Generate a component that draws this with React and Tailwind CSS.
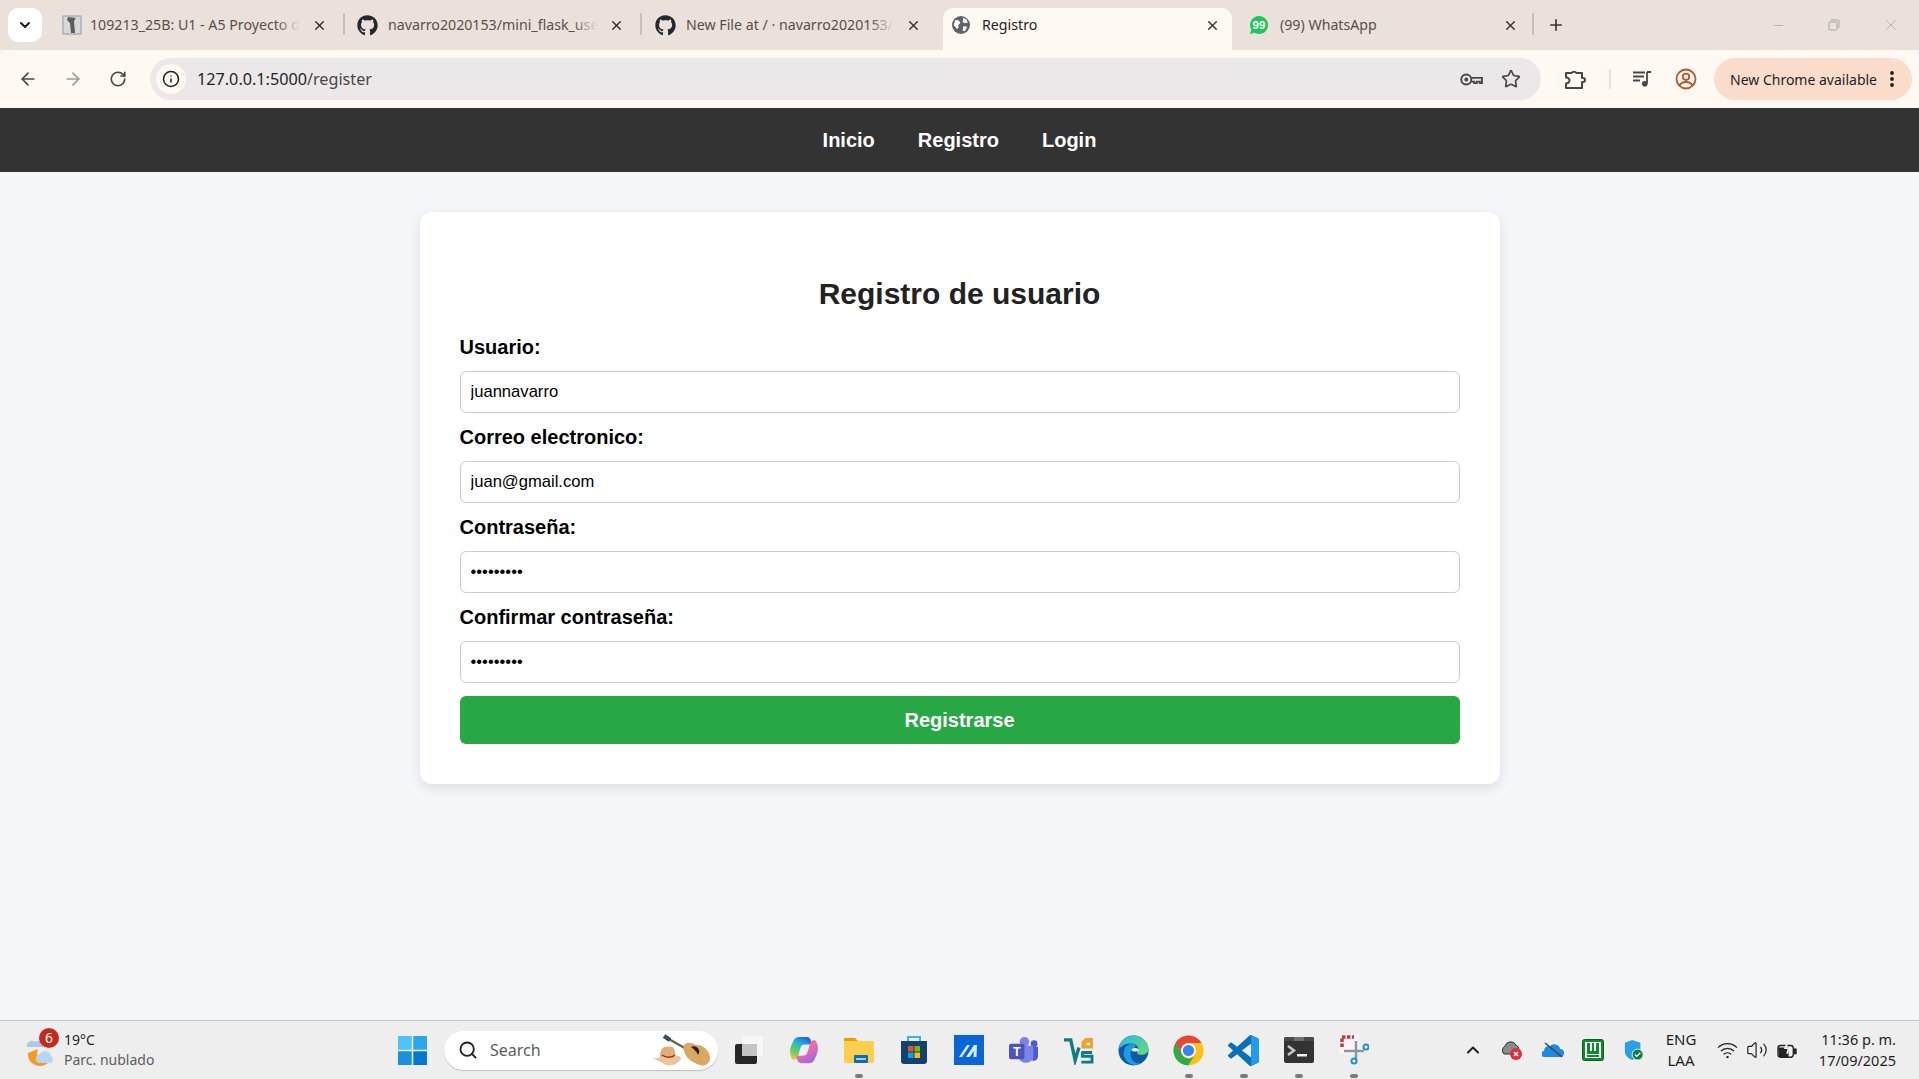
import React from 'react';
import { ArrowLeft, ArrowRight, RotateCw, Info, Star, ChevronDown, X, Plus, Minus, Search, ChevronUp, Volume2 } from 'lucide-react';
import { FaGithub } from 'react-icons/fa';

const GlobeIcon = () => (
  <svg viewBox="0 0 16 16" className="w-[18px] h-[18px]"><circle cx="8" cy="8" r="8" fill="#5f6368"/><path d="M3 3.500l3 .5 1.500 2-2 2.200.3 2.300-1.500 1-2.800-3.500zM10 1.500l3 1.500 1 3-2.500.5-2-1zM10 9l3.500.5-2 4-2-.5z" fill="#fff"/></svg>
);
const MoodleIcon = () => (
  <svg viewBox="0 0 20 20" className="w-[20px] h-[20px]"><rect x="1" y="1" width="18" height="18" fill="#d8d8d8" stroke="#9a9a9a"/><path d="M6 2l8 1-2 3 1 12H9L8 8 5 5z" fill="#5c5c5c"/></svg>
);
const WhatsIcon = () => (
  <svg viewBox="0 0 20 20" className="w-[20px] h-[20px]"><path d="M10 1a9 9 0 0 0-7.700 13.600L1 19l4.600-1.200A9 9 0 1 0 10 1z" fill="#1fc85a"/><text x="10" y="14" textAnchor="middle" fontSize="11.500" fontWeight="700" fill="#fff" fontFamily="Liberation Sans">99</text></svg>
);
const KeyIcon = () => (
  <svg viewBox="0 0 22 14" className="w-[23px] h-[15px]" fill="none" stroke="#474747" strokeWidth="1.800"><circle cx="6" cy="7" r="4.800"/><circle cx="6" cy="7" r="1" fill="#474747"/><path d="M10.800 5.500H21v5h-2V9h-3v1.500h-2.500V9h-2.700"/></svg>
);
const PuzzleIcon = () => (
  <svg viewBox="0 0 22 22" className="w-[22px] h-[22px]" fill="none" stroke="#474747" strokeWidth="2" strokeLinejoin="round"><path d="M2 5h5.500a3 3 0 0 1 5 0H18v5h1a2 2 0 0 1 0 4h-1v6H2v-4.500a3.500 3 0 0 0 0-6z"/></svg>
);
const MusicIcon = () => (
  <svg viewBox="0 0 20 18" className="w-[20px] h-[18px]" fill="none" stroke="#474747" strokeWidth="1.800"><path d="M1 2.500h12M1 6.500h11M1 10.500h7M15 2v11.500M15 2h4"/><circle cx="12.800" cy="13.800" r="2.800" fill="#474747" stroke="none"/></svg>
);
const ProfileIcon = () => (
  <svg viewBox="0 0 22 22" className="w-[22px] h-[22px]" fill="none" stroke="#b5552a" strokeWidth="1.800"><circle cx="11" cy="11" r="9.500"/><circle cx="11" cy="8.800" r="3.200"/><path d="M4.500 17.500c1.500-2.800 3.800-3.500 6.500-3.500s5 .7 6.500 3.500"/></svg>
);
const RestoreIcon = () => (
  <svg viewBox="0 0 12 12" className="w-[12px] h-[12px]" fill="none" stroke="#a8a29e"><rect x="1" y="3" width="8" height="8" rx="1"/><path d="M3 1h7a1 1 0 0 1 1 1v7"/></svg>
);
const DotsIcon = () => (
  <svg viewBox="0 0 4 18" className="w-[4px] h-[18px]" fill="#1f1f1f"><circle cx="2" cy="3" r="1.900"/><circle cx="2" cy="9" r="1.900"/><circle cx="2" cy="15" r="1.900"/></svg>
);

const tabs = [
  { title: '109213_25B: U1 - A5 Proyecto de', icon: <MoodleIcon />, box: 'w-[297px] pl-[14px] pr-[18px]', iconClass: 'w-[20px] mr-[8px]', sep: true },
  { title: 'navarro2020153/mini_flask_user', icon: <FaGithub className="w-[21px] h-[21px] text-[#24292f]" />, box: 'w-[297px] pl-[12px] pr-[18px]', iconClass: 'w-[21px] mr-[10px]', sep: true },
  { title: 'New File at / · navarro2020153/mi', icon: <FaGithub className="w-[21px] h-[21px] text-[#24292f]" />, box: 'w-[301px] pl-[13px] pr-[22px]', iconClass: 'w-[21px] mr-[10px]', sep: false },
  { title: 'Registro', icon: <GlobeIcon />, iconClass: 'w-[18px] mr-[12px]', active: true, sep: false },
  { title: '(99) WhatsApp', icon: <WhatsIcon />, box: 'w-[302px] pl-[17px] pr-[16px]', iconClass: 'w-[20px] mr-[11px]', sep: true },
];

function Tab({ t }) {
  return (
    <div className={t.active
      ? 'relative flex items-center h-[42px] w-[289px] pl-[9px] pr-[12px] pb-[8px] bg-[#fff8f3] rounded-t-[10px] text-[#1f1f1f]'
      : 'relative flex items-center h-[42px] pb-[8px] text-[#5a4f4a] ' + t.box}>
      <div className={'flex items-center justify-center shrink-0 ' + t.iconClass}>{t.icon}</div>
      <div className="relative flex-1 overflow-hidden whitespace-nowrap text-[14.200px] leading-[20px]">
        {t.title}
        {!t.active && <div className="absolute right-0 top-0 h-full w-[24px] bg-gradient-to-r from-transparent to-[#ebe1db]" />}
      </div>
      <X className="ml-[12px] shrink-0 text-[#3d3431]" size={15} strokeWidth={2.400} />
      {t.sep && <div className="absolute right-0 top-[5px] h-[22px] w-[2px] bg-[#c9c0ba]" />}
    </div>
  );
}

const IconBox = ({ children, dot }) => (
  <div className="relative flex items-center justify-center w-[55px] h-[58px]">
    {children}
    {dot && <div className="absolute bottom-[1px] left-[24px] w-[8px] h-[4px] rounded-full bg-[#7b7b7b]" />}
  </div>
);

const taskIcons = [
  { el: <svg viewBox="0 0 30 30" className="w-[30px] h-[30px]"><rect x="1" y="9" width="22" height="20" rx="2" fill="#262626"/><rect x="8" y="1" width="21" height="20" rx="2" fill="#f6f6f6"/><rect x="8" y="9" width="15" height="12" fill="#c4c4c4"/></svg> },
  { el: <svg viewBox="0 0 32 32" className="w-[30px] h-[30px]"><defs><linearGradient id="cp1" x1="0.700" y1="0" x2="0.200" y2="1"><stop offset="0" stopColor="#1b62e0"/><stop offset=".35" stopColor="#22b8d6"/><stop offset=".7" stopColor="#6ccb5f"/><stop offset="1" stopColor="#f5c33b"/></linearGradient><linearGradient id="cp2" x1="0.800" y1="1" x2="0.200" y2="0"><stop offset="0" stopColor="#f05a3c"/><stop offset=".4" stopColor="#ee6fa8"/><stop offset="1" stopColor="#9a63e6"/></linearGradient></defs><path d="M11 2h8c2 0 3.500 1.200 4 3l1.500 5H17c-2.500 0-4 1.200-4.700 3.500l-2.500 9c-.7 2.500-2.200 4-4.800 4H4C.5 22 .5 16 2.500 11l3-6.500C6.500 3 8.500 2 11 2z" fill="url(#cp1)"/><path transform="rotate(180 16 16)" d="M11 2h8c2 0 3.500 1.200 4 3l1.500 5H17c-2.500 0-4 1.200-4.700 3.500l-2.500 9c-.7 2.500-2.200 4-4.800 4H4C.5 22 .5 16 2.500 11l3-6.500C6.500 3 8.500 2 11 2z" fill="url(#cp2)"/></svg> },
  { dot: true, el: <svg viewBox="0 0 30 30" className="w-[30px] h-[30px]"><path d="M0 4a1 1 0 0 1 1-1h10l3 3H0z" fill="#e3a008"/><rect x="0" y="6" width="30" height="22" rx="1" fill="#fdcf4d"/><rect x="10" y="20" width="14" height="8" rx="1" fill="#0f6cbd"/><rect x="12" y="23" width="10" height="2" fill="#9fd0f5"/></svg> },
  { el: <svg viewBox="0 0 30 30" className="w-[30px] h-[30px]"><path d="M9 6V2h12v4" fill="none" stroke="#33b6e8" strokeWidth="2"/><path d="M2 6h26v20a3 3 0 0 1-3 3H5a3 3 0 0 1-3-3z" fill="#14406f"/><rect x="9" y="11" width="5.500" height="5.500" fill="#f25022"/><rect x="15.500" y="11" width="5.500" height="5.500" fill="#7fba00"/><rect x="9" y="17.500" width="5.500" height="5.500" fill="#00a4ef"/><rect x="15.500" y="17.500" width="5.500" height="5.500" fill="#ffb900"/></svg> },
  { el: <svg viewBox="0 0 30 30" className="w-[30px] h-[30px]"><rect width="30" height="30" fill="#0a66d8"/><path d="M5 22l8-12h3l-8 12zM12 22l8-12h3l-.5 12h-3l.3-6-4 6z" fill="#d8ebff"/></svg> },
  { el: <svg viewBox="0 0 32 30" className="w-[31px] h-[29px]"><circle cx="17" cy="6" r="5" fill="#7b83eb"/><circle cx="27" cy="8" r="3.500" fill="#5059c9"/><path d="M22 11h9v10a4 4 0 0 1-6 4z" fill="#5059c9"/><path d="M9 10h17v13a8 7 0 0 1-15 0z" fill="#7b83eb"/><rect x="1" y="8" width="16" height="16" rx="2" fill="#4b53bc"/><text x="9" y="21" textAnchor="middle" fontSize="13" fontWeight="700" fill="#fff" fontFamily="Liberation Sans">T</text></svg> },
  { el: <svg viewBox="0 0 32 30" className="w-[31px] h-[29px]"><path d="M1 4h7l4.500 21L16.500 12" fill="none" stroke="#0d7c86" strokeWidth="3.500"/><path d="M19 17h11M19 27h11v-6H20v-4" fill="none" stroke="#0d7c86" strokeWidth="3"/><path d="M19 13V6l4-4h8v11z" fill="#f59e2e"/><rect x="24" y="7" width="4" height="2.500" fill="#fff"/></svg> },
  { el: <svg viewBox="0 0 32 32" className="w-[31px] h-[31px]"><defs><linearGradient id="ed1" x1="0" y1="0" x2="1" y2="1"><stop offset="0" stopColor="#2fb7ea"/><stop offset="1" stopColor="#66dd6e"/></linearGradient></defs><circle cx="16" cy="16" r="15.500" fill="#0c59a4"/><path d="M1 15C2 6 8 .5 16 .5c9 0 15.500 7 15.500 14 0 4-3.500 6-7 6-2.500 0-5-1-5-2.500 3-2 2-8-4-9-5-.8-12 1-14.500 6z" fill="url(#ed1)"/><path d="M14 9c-6 1-9 6-8 12 1 5 6 10 12 10 2 0 5-1 6-2-6 1-11-3-11-9 0-4 2-6 4-7 3-1.500 0-4-3-4z" fill="#1b9de2"/><path d="M16.500 13.500c3-.8 5.500 1 5.500 3-3 .7-7.500 1-8-1 .2-1 1.300-1.700 2.500-2z" fill="#eeeeee"/></svg> },
  { dot: true, el: <svg viewBox="0 0 32 32" className="w-[31px] h-[31px]"><circle cx="16" cy="16" r="15.500" fill="#fbc116"/><path d="M2.600 8.200A15.500 15.500 0 0 1 29.400 8.200H16A7.800 7.800 0 0 0 9.200 20z" fill="#e8453c"/><path d="M2.600 8.200L9.200 20A7.800 7.800 0 0 0 23 20L15.500 31.500A15.500 15.500 0 0 1 2.600 8.200z" fill="#2da94f"/><circle cx="16" cy="16" r="7.500" fill="#fff"/><circle cx="16" cy="16" r="5.800" fill="#3b82f0"/></svg> },
  { dot: true, el: <svg viewBox="0 0 100 100" className="w-[31px] h-[31px]"><path fillRule="evenodd" d="M96.500 10.800L75.900.9a6.200 6.200 0 0 0-7.100 1.200L29.400 38 12.200 25a4.200 4.200 0 0 0-5.300.2L1.400 30.300a4.200 4.200 0 0 0 0 6.200L16.300 50 1.400 63.500a4.200 4.200 0 0 0 0 6.200l5.500 5a4.200 4.200 0 0 0 5.300.2L29.400 62l39.400 36a6.200 6.200 0 0 0 7.100 1.200l20.600-9.900a6.200 6.200 0 0 0 3.500-5.600V16.400a6.200 6.200 0 0 0-3.500-5.600zM75 27.300L45.100 50 75 72.700z" fill="#0a70b8"/><path d="M72 0l24.500 10.800a6 6 0 0 1 3.500 5.600v67.300a6 6 0 0 1-3.500 5.600L72 100c2-1 3-2 3-5V5c0-3-1-4-3-5z" fill="#1f9cf0"/></svg> },
  { dot: true, el: <svg viewBox="0 0 30 26" className="w-[30px] h-[26px]"><rect width="30" height="26" rx="2" fill="#333333"/><path d="M0 2a2 2 0 0 1 2-2h8v4H0z" fill="#4a4a4a"/><rect x="10" width="10" height="4" fill="#707070"/><path d="M20 0h8a2 2 0 0 1 2 2v2H20z" fill="#4a4a4a"/><path d="M4 9l6 4.500-6 4.500" fill="none" stroke="#c8c8c8" strokeWidth="2.500"/><rect x="13" y="17" width="10" height="2.500" fill="#eeeeee"/></svg> },
  { dot: true, el: <svg viewBox="0 0 30 32" className="w-[30px] h-[32px]"><rect x="0" y="0" width="20" height="20" rx="2" fill="#f6f6f6"/><path d="M3 13V3h12" fill="none" stroke="#d13438" strokeWidth="3.500" strokeDasharray="3.500 1.500"/><path d="M17 7v19M5 17h20" stroke="#8d96a0" strokeWidth="2.500"/><circle cx="27" cy="13" r="2.500" fill="#ffffff" stroke="#1f8fd6" strokeWidth="2"/><circle cx="15" cy="27" r="2.500" fill="#ffffff" stroke="#1f8fd6" strokeWidth="2"/></svg> },
];

export default function App() {
  return (
    <div className="flex flex-col h-screen w-full overflow-hidden bg-[#f4f6f9] font-['Liberation_Sans',sans-serif]">
      <div className="font-['Noto_Sans',sans-serif]">
        {/* tab strip */}
        <div className="flex items-end h-[50px] bg-[#ebe1db]">
          <div className="flex items-center justify-center w-[34px] h-[34px] ml-[8px] mb-[8px] mr-[6px] rounded-[10px] bg-white">
            <ChevronDown size={16} strokeWidth={3} className="text-[#1f1f1f]" />
          </div>
          {tabs.map((t) => <Tab key={t.title} t={t} />)}
          <div className="flex items-center self-stretch ml-[13px] w-[40px]">
            <Plus size={18} strokeWidth={2.200} className="text-[#3d3431]" />
          </div>
          <div className="flex items-center self-stretch ml-auto text-[#a8a29e]">
            <div className="flex items-center justify-center w-[56px] h-[50px]"><Minus size={15} strokeWidth={1.200} /></div>
            <div className="flex items-center justify-center w-[56px] h-[50px]"><RestoreIcon /></div>
            <div className="flex items-center justify-center w-[57px] h-[50px]"><X size={18} strokeWidth={1} /></div>
          </div>
        </div>
        {/* toolbar */}
        <div className="flex items-center h-[58px] bg-[#fff8f3] rounded-t-[10px] text-[#474747]">
          <div className="flex items-center justify-center w-[46px] ml-[5px]"><ArrowLeft size={20} strokeWidth={2} /></div>
          <div className="flex items-center justify-center w-[44px] text-[#9d9a97]"><ArrowRight size={20} strokeWidth={2} /></div>
          <div className="flex items-center justify-center w-[46px]"><RotateCw size={18} strokeWidth={2.200} /></div>
          <div className="flex items-center h-[42px] w-[1391px] ml-[9px] rounded-full bg-[#ece8e9]">
            <div className="flex items-center justify-center w-[30px] h-[30px] ml-[6px] rounded-full bg-[#fff8f3]"><Info size={18} strokeWidth={2} className="text-[#1f1f1f]" /></div>
            <div className="ml-[11px] text-[16.200px] leading-[22px] text-[#1f1f1f]">127.0.0.1:5000<span className="text-[#474747]">/register</span></div>
            <div className="ml-auto mr-[20px] flex items-center gap-[18px]"><KeyIcon /><Star size={20} strokeWidth={2} /></div>
          </div>
          <div className="flex items-center justify-center w-[68px]"><PuzzleIcon /></div>
          <div className="w-[2px] h-[20px] bg-[#f6dccb]" />
          <div className="flex items-center justify-center w-[42px] ml-[10px]"><MusicIcon /></div>
          <div className="flex items-center justify-center w-[46px]"><ProfileIcon /></div>
          <div className="flex items-center h-[42px] w-[198px] ml-[5px] pl-[16px] rounded-full bg-[#fbdccb] text-[14px] text-[#1f1f1f] whitespace-nowrap">
            New Chrome available
            <span className="ml-[13px]"><DotsIcon /></span>
          </div>
        </div>
      </div>

      {/* page nav */}
      <nav className="flex items-center justify-center gap-[43px] h-[64px] bg-[#333333] text-white font-bold text-[20px]">
        <span>Inicio</span><span>Registro</span><span>Login</span>
      </nav>

      {/* page */}
      <main className="flex-1 min-h-0">
        <div className="w-[1080px] mx-auto mt-[40px] p-[40px] bg-white rounded-[12px] shadow-[0_4px_12px_rgba(0,0,0,0.1)]">
          <h2 className="mt-[25px] mb-[26px] text-center text-[30px] leading-[34px] font-bold text-[#222222]">Registro de usuario</h2>
          {[
            ['Usuario:', 'text', 'juannavarro'],
            ['Correo electronico:', 'email', 'juan@gmail.com'],
            ['Contraseña:', 'password', 'juan12345'],
            ['Confirmar contraseña:', 'password', 'juan12345'],
          ].map(([label, type, value]) => (
            <div key={label}>
              <label className="block h-[20px] mb-[14px] text-[20px] leading-[20px] font-bold text-black">{label}</label>
              <input readOnly type={type} defaultValue={value} className="block w-full h-[42px] mb-[14px] px-[10px] border border-[#cccccc] rounded-[6px] bg-white text-[16.600px] text-black outline-none" />
            </div>
          ))}
          <button className="block w-full h-[48px] -mt-[1px] rounded-[6px] bg-[#28a745] text-white text-[20px] font-bold">Registrarse</button>
        </div>
      </main>

      {/* taskbar */}
      <footer className="flex items-center h-[59px] border-t border-[#c4c4c4] bg-[#eeeeee] font-['Noto_Sans',sans-serif] text-[#1f1f1f]">
        <div className="flex items-center w-[388px] pl-[25px]">
          <div className="relative w-[30px] h-[34px] mr-[9px]">
            <svg viewBox="0 0 30 34" className="w-[30px] h-[34px]"><path d="M2 14a5 5 0 0 1 8-5 5 5 0 0 1 8 5z" fill="#a9c9ec"/><path d="M3 20a12 12 0 0 0 20 10 10 10 0 0 1-10-14z" fill="#f59a23"/><path d="M13 30a5 5 0 0 1 2-9 6 6 0 0 1 11 2 4 4 0 0 1 0 7z" fill="#b8d5f2"/></svg>
            <div className="absolute -top-[5px] left-[14px] flex items-center justify-center w-[20px] h-[20px] rounded-full bg-[#c42b1c] text-white text-[14px] leading-none">6</div>
          </div>
          <div className="leading-[20px] text-[14px]">
            <div>19°C</div>
            <div className="text-[#5d5d5d]">Parc. nublado</div>
          </div>
        </div>
        <div className="flex items-center justify-center w-[48px]">
          <svg viewBox="0 0 30 30" className="w-[29px] h-[29px]"><rect width="14.200" height="14.200" fill="#4cc2ff"/><rect x="15.800" width="14.200" height="14.200" fill="#2aa5ee"/><rect y="15.800" width="14.200" height="14.200" fill="#1a92e0"/><rect x="15.800" y="15.800" width="14.200" height="14.200" fill="#0078d4"/></svg>
        </div>
        <div className="flex items-center w-[274px] h-[39px] ml-[8px] pl-[14px] pr-[4px] rounded-full bg-white shadow-[0_1px_1px_rgba(0,0,0,0.2)]">
          <Search size={20} strokeWidth={2.200} className="text-[#222222]" />
          <span className="ml-[12px] text-[16px] text-[#5d5d5d]">Search</span>
          <svg viewBox="0 0 66 36" className="ml-auto w-[66px] h-[36px]"><path d="M19 6l23 13" stroke="#6b6255" strokeWidth="2.500"/><path d="M16 4l6 4" stroke="#3d4a57" strokeWidth="4.500"/><path d="M36 13c4-4 9-2 12 0 6-1 14 5 14 13 0 6-6 9-10 7-6-2-12-5-15-11-1-3-2-6-1-9z" fill="#d9a863"/><path d="M43 15c3-2 7 0 8 3 1 2-1 5-1 5-1-3-4-6-7-8z" fill="#2b2118"/><path d="M12 26c0-8 2-12 8-11 4-2 9 2 7 12z" fill="#e3ad7a"/><path d="M4 26c6 1 10-1 10-2 6 3 12 2 14 0 3-1 5 1 5 3-3 6-13 8-17 5-4-3-8-4-12-6z" fill="#ecc49a"/><path d="M14 23c4 3 10 3 13 0" stroke="#8a3f1f" strokeWidth="1.500" fill="none"/></svg>
        </div>
        <div className="flex items-center ml-[3px]">
          {taskIcons.map((t, i) => <IconBox key={i} dot={t.dot}>{t.el}</IconBox>)}
        </div>
        <div className="flex items-center flex-1 min-w-0 ml-[82px] text-[#1f1f1f]">
          <ChevronUp size={20} strokeWidth={2.400} />
          <svg viewBox="0 0 22 22" className="w-[22px] h-[22px] ml-[18px]"><path d="M3 15a5 5 0 0 1 1-8 6 6 0 0 1 11-1 5 5 0 0 1 3 5v4z" fill="#8a8a8a" stroke="#333"/><circle cx="15" cy="15" r="6" fill="#e02d3c"/><path d="M13 13l4 4M17 13l-4 4" stroke="#fff" strokeWidth="1.500"/></svg>
          <svg viewBox="0 0 22 16" className="w-[22px] h-[16px] ml-[19px]"><path d="M3 15a3 3 0 0 1-1-6 5 5 0 0 1 6-5 6 6 0 0 1 10 3 4 4 0 0 1 0 8z" fill="#1e88e5"/><path d="M3 1l17 14" stroke="#444" strokeWidth="1.500"/></svg>
          <svg viewBox="0 0 22 22" className="w-[22px] h-[22px] ml-[18px]"><rect x=".5" y=".5" width="21" height="21" rx="2" fill="#0f8a2f" stroke="#0a5e20"/><rect x="3" y="3" width="16" height="16" fill="#fff"/><path d="M5 4h3v8h2V4h2v8h2V4h3v11H5zM5 16h12v2H5z" fill="#0f8a2f"/></svg>
          <svg viewBox="0 0 22 24" className="w-[20px] h-[22px] ml-[20px]"><path d="M9 1l9 3v9c0 5-4 8-9 10-5-2-8-5-8-10V4z" fill="#2aa0e8"/><circle cx="15" cy="17" r="6" fill="#107c41" stroke="#eeeeee"/><path d="M12 17l2 2 4-4" stroke="#fff" strokeWidth="1.500" fill="none"/></svg>
          <div className="w-[60px] ml-[7px] text-center text-[15px] leading-[21px]"><div>ENG</div><div>LAA</div></div>
          <svg viewBox="0 0 22 18" className="w-[21px] h-[17px] ml-[6px]" fill="none" stroke="#222" strokeWidth="1.300"><path d="M1 6a14 14 0 0 1 20 0M4 9.500a10 10 0 0 1 14 0M7 13a6 6 0 0 1 8 0"/><circle cx="11" cy="16" r="1.300" fill="#222" stroke="none"/></svg>
          <Volume2 size={22} strokeWidth={1.300} className="ml-[8px]" />
          <svg viewBox="0 0 22 20" className="w-[20px] h-[18px] ml-[9px]" fill="none" stroke="#222" strokeWidth="1.500"><rect x="1" y="5" width="17" height="13" rx="3"/><rect x="19" y="9" width="2" height="5" fill="#222"/><path d="M2 8h10v9H3z" fill="#222"/><path d="M12 1L9 8h4l-2 6" stroke="#eeeeee" strokeWidth="2"/></svg>
          <div className="ml-auto mr-[23px] text-right text-[14.500px] leading-[21px]"><div>11:36 p. m.</div><div>17/09/2025</div></div>
        </div>
      </footer>
    </div>
  );
}
